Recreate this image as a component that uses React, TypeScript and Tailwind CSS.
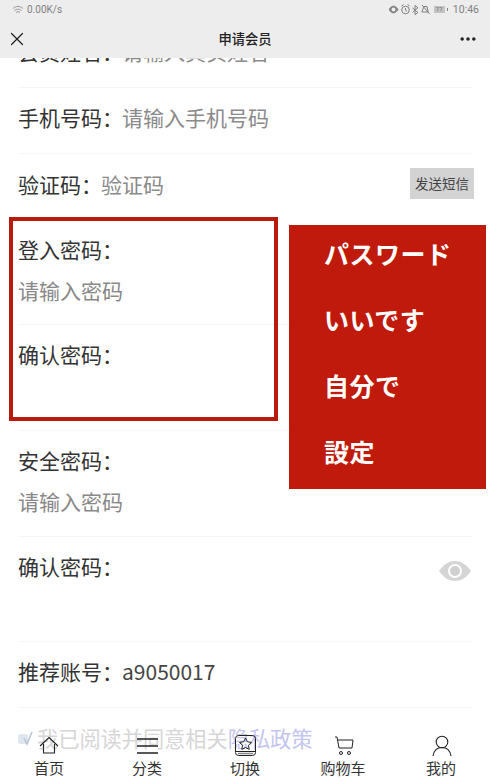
import { MoreHorizontal, X } from "lucide-react";

const cjk = "font-['Noto_Sans_CJK_SC','Noto_Sans',sans-serif]";

const Row = ({ label, value, muted = true }: { label: string; value: string; muted?: boolean }) => (
  <div className="flex h-[66px] items-center border-b border-[#f6f6f6] pb-[5px]">
    <span className="text-[#333]">{label}</span>
    <span className={muted ? "ml-[-1px] text-[#8a8a8a]" : "ml-[-1px] text-[#444]"}>{value}</span>
  </div>
);

const Stacked = ({
  label,
  value,
  tall = false,
  children,
}: {
  label: string;
  value?: string;
  tall?: boolean;
  children?: React.ReactNode;
}) => (
  <div className={`relative flex flex-col border-b border-[#f6f6f6] pt-[11px] ${tall ? "h-[106px]" : "h-[105px]"}`}>
    <span className="h-[39px] leading-[36px] text-[#333]">{label}</span>
    <span className="h-[40px] leading-[40px] text-[#888]">{value}</span>
    {children}
  </div>
);

const Tab = ({ label, children }: { label: string; children: React.ReactNode }) => (
  <div className="flex w-[98px] flex-col items-center">
    <div className="flex h-[25px] items-end">{children}</div>
    <span className="text-[15px] leading-[22px] text-[#333]">{label}</span>
  </div>
);

export default function App() {
  return (
    <div className={`relative h-[784px] w-[490px] overflow-hidden bg-white text-[21px] ${cjk}`}>
      <div className="ml-[18px] mr-[17px] pt-[22px]">
        <Row label="会员姓名：" value="请输入真实姓名" />
        <Row label="手机号码：" value="请输入手机号码" />
        <div className="relative flex h-[66px] items-center pb-[5px]">
          <span className="text-[#333]">验证码：</span>
          <span className="ml-[-1px] text-[#8a8a8a]">验证码</span>
          <div className="absolute right-[-1px] top-[14px] flex h-[31px] w-[64px] items-center justify-center bg-[#d3d3d3] text-[13.500px] text-[#444]">
            发送短信
          </div>
        </div>
        <Stacked label="登入密码：" value="请输入密码" />
        <Stacked label="确认密码：" tall />
        <Stacked label="安全密码：" value="请输入密码" tall />
        <Stacked label="确认密码：">
          <svg className="absolute right-[1px] top-[23px]" width="34" height="22" viewBox="0 0 34 22">
            <path d="M1 11C6 4 11 1 17 1s11 3 16 10c-5 7-10 10-16 10S6 18 1 11z" fill="#d5d5d5" />
            <circle cx="17" cy="11" r="7" fill="#fff" />
            <circle cx="17" cy="11" r="5" fill="#d0d0d0" />
          </svg>
        </Stacked>
        <Row label="推荐账号：" value="a9050017" muted={false} />
        <div className="mt-[14px] flex items-center text-[21.200px] text-[#d6d6d6]">
          <svg width="15" height="15" viewBox="0 0 15 15" className="mt-[1px]">
            <rect x="0" y="3" width="10" height="10" rx="3" fill="#dfe6ee" />
            <path d="M6 7l3 6 5-12" fill="none" stroke="#b9c6d6" strokeWidth="1.600" />
          </svg>
          <span className="ml-[4px]">我已阅读并同意相关</span>
          <span className="text-[#c4c4f0]">隐私政策</span>
        </div>
      </div>

      <div className="absolute left-0 top-0 w-full bg-[#ededed]">
        <div className="flex h-[19px] items-center justify-between pl-[12px] pr-[11px] font-['Roboto',sans-serif] text-[#808080]">
          <div className="flex items-center gap-[3px]">
            <svg width="12" height="10" viewBox="0 0 12 10" fill="none" stroke="#999" strokeWidth="1">
              <path d="M1 3.500c3.300-2.800 6.700-2.800 10 0M2.500 5.500c2.300-1.800 4.700-1.800 7 0M4 7.500c1.300-1 2.700-1 4 0" />
            </svg>
            <span className="text-[10px]">0.00K/s</span>
          </div>
          <div className="flex items-center gap-[4px]">
            <svg width="60" height="11" viewBox="0 0 60 11" fill="none" stroke="#808080" strokeWidth="1">
              <path d="M0 5.500c3-4.500 6-4.500 9 0-3 4.500-6 4.500-9 0z" fill="#808080" />
              <circle cx="4.500" cy="5.500" r="2" fill="#ededed" stroke="none" />
              <circle cx="16.500" cy="6" r="3.800" />
              <path d="M16.500 4v2.200l1.500 1M12.500 2l2-1.500M20.500 2l-2-1.500" />
              <path d="M26 1.500l3 2.300-3 2.400 3 2.300-3 2.200V1.500zM23.500 4l2.500 2.200-2.500 2.300" />
              <path d="M35 2.500h3l1.200 5.500h-6.400zM33 1l7.500 9" />
              <rect x="45" y="2" width="11" height="7" fill="#c4c4c4" stroke="none" />
              <path d="M58.500 4v3" />
              <path d="M47 3.500h2.500L48 7.500M50.500 3.500H53L51.500 7.500" strokeWidth=".7" />
            </svg>
            <span className="text-[10.500px]">10:46</span>
          </div>
        </div>
        <div className="flex h-[39px] items-center justify-between pl-[6px] pr-[12px]">
          <X size={22} strokeWidth={1.300} color="#222" />
          <span className="ml-[4px] text-[13.300px] font-medium text-[#222]">申请会员</span>
          <MoreHorizontal size={20} strokeWidth={2.200} color="#222" />
        </div>
      </div>

      <div className="absolute left-[9px] top-[217px] h-[204px] w-[269px] border-[4px] border-[#b81a0c]" />

      <div className="absolute left-[289px] top-[225px] h-[264px] w-[197px] overflow-hidden bg-[#bf1a0b] pl-[35px] font-['Noto_Sans_CJK_JP',sans-serif] text-[25px] font-bold leading-[66px] tracking-[0.5px] text-white">
        <div className="mt-[-5px]">パスワード</div>
        <div>いいです</div>
        <div>自分で</div>
        <div>設定</div>
      </div>

      <div className="absolute bottom-[5px] left-0 flex w-full">
        <Tab label="首页">
          <svg width="24" height="24" viewBox="0 0 24 24" fill="none" stroke="#222" strokeWidth="1.100">
            <path d="M3 13L12 4.500 21 13" />
            <path d="M6.500 11v9h11v-9" />
          </svg>
        </Tab>
        <Tab label="分类">
          <svg width="24" height="24" viewBox="0 0 24 24" fill="none" stroke="#222" strokeWidth="1.300">
            <path d="M2 6h21M2 13h21M2 20h21" />
          </svg>
        </Tab>
        <Tab label="切换">
          <svg width="24" height="24" viewBox="0 0 24 24" fill="none" stroke="#222" strokeWidth="1">
            <rect x="2.500" y="2.500" width="20" height="20" rx="3" />
            <path d="M12.500 5l1.900 3.800 4.100.6-3 2.900.7 4.100-3.700-1.900-3.700 1.900.7-4.100-3-2.900 4.100-.6z" />
            <path d="M2.500 18.500h20" />
            <path d="M5 20.500h15" strokeWidth="1.500" stroke="#888" />
          </svg>
        </Tab>
        <Tab label="购物车">
          <svg width="24" height="24" viewBox="0 0 24 24" fill="none" stroke="#222" strokeWidth="1">
            <path d="M4 4h2l2 11h13l1-8H7" />
            <circle cx="10" cy="20" r="1.500" />
            <circle cx="18" cy="20" r="1.500" />
          </svg>
        </Tab>
        <Tab label="我的">
          <svg width="24" height="24" viewBox="0 0 24 24" fill="none" stroke="#222" strokeWidth="1.100">
            <circle cx="13" cy="9" r="5.800" />
            <path d="M4 23c.8-5 4-8.500 9-8.500s8.200 3.500 9 8.500" />
          </svg>
        </Tab>
      </div>
    </div>
  );
}
